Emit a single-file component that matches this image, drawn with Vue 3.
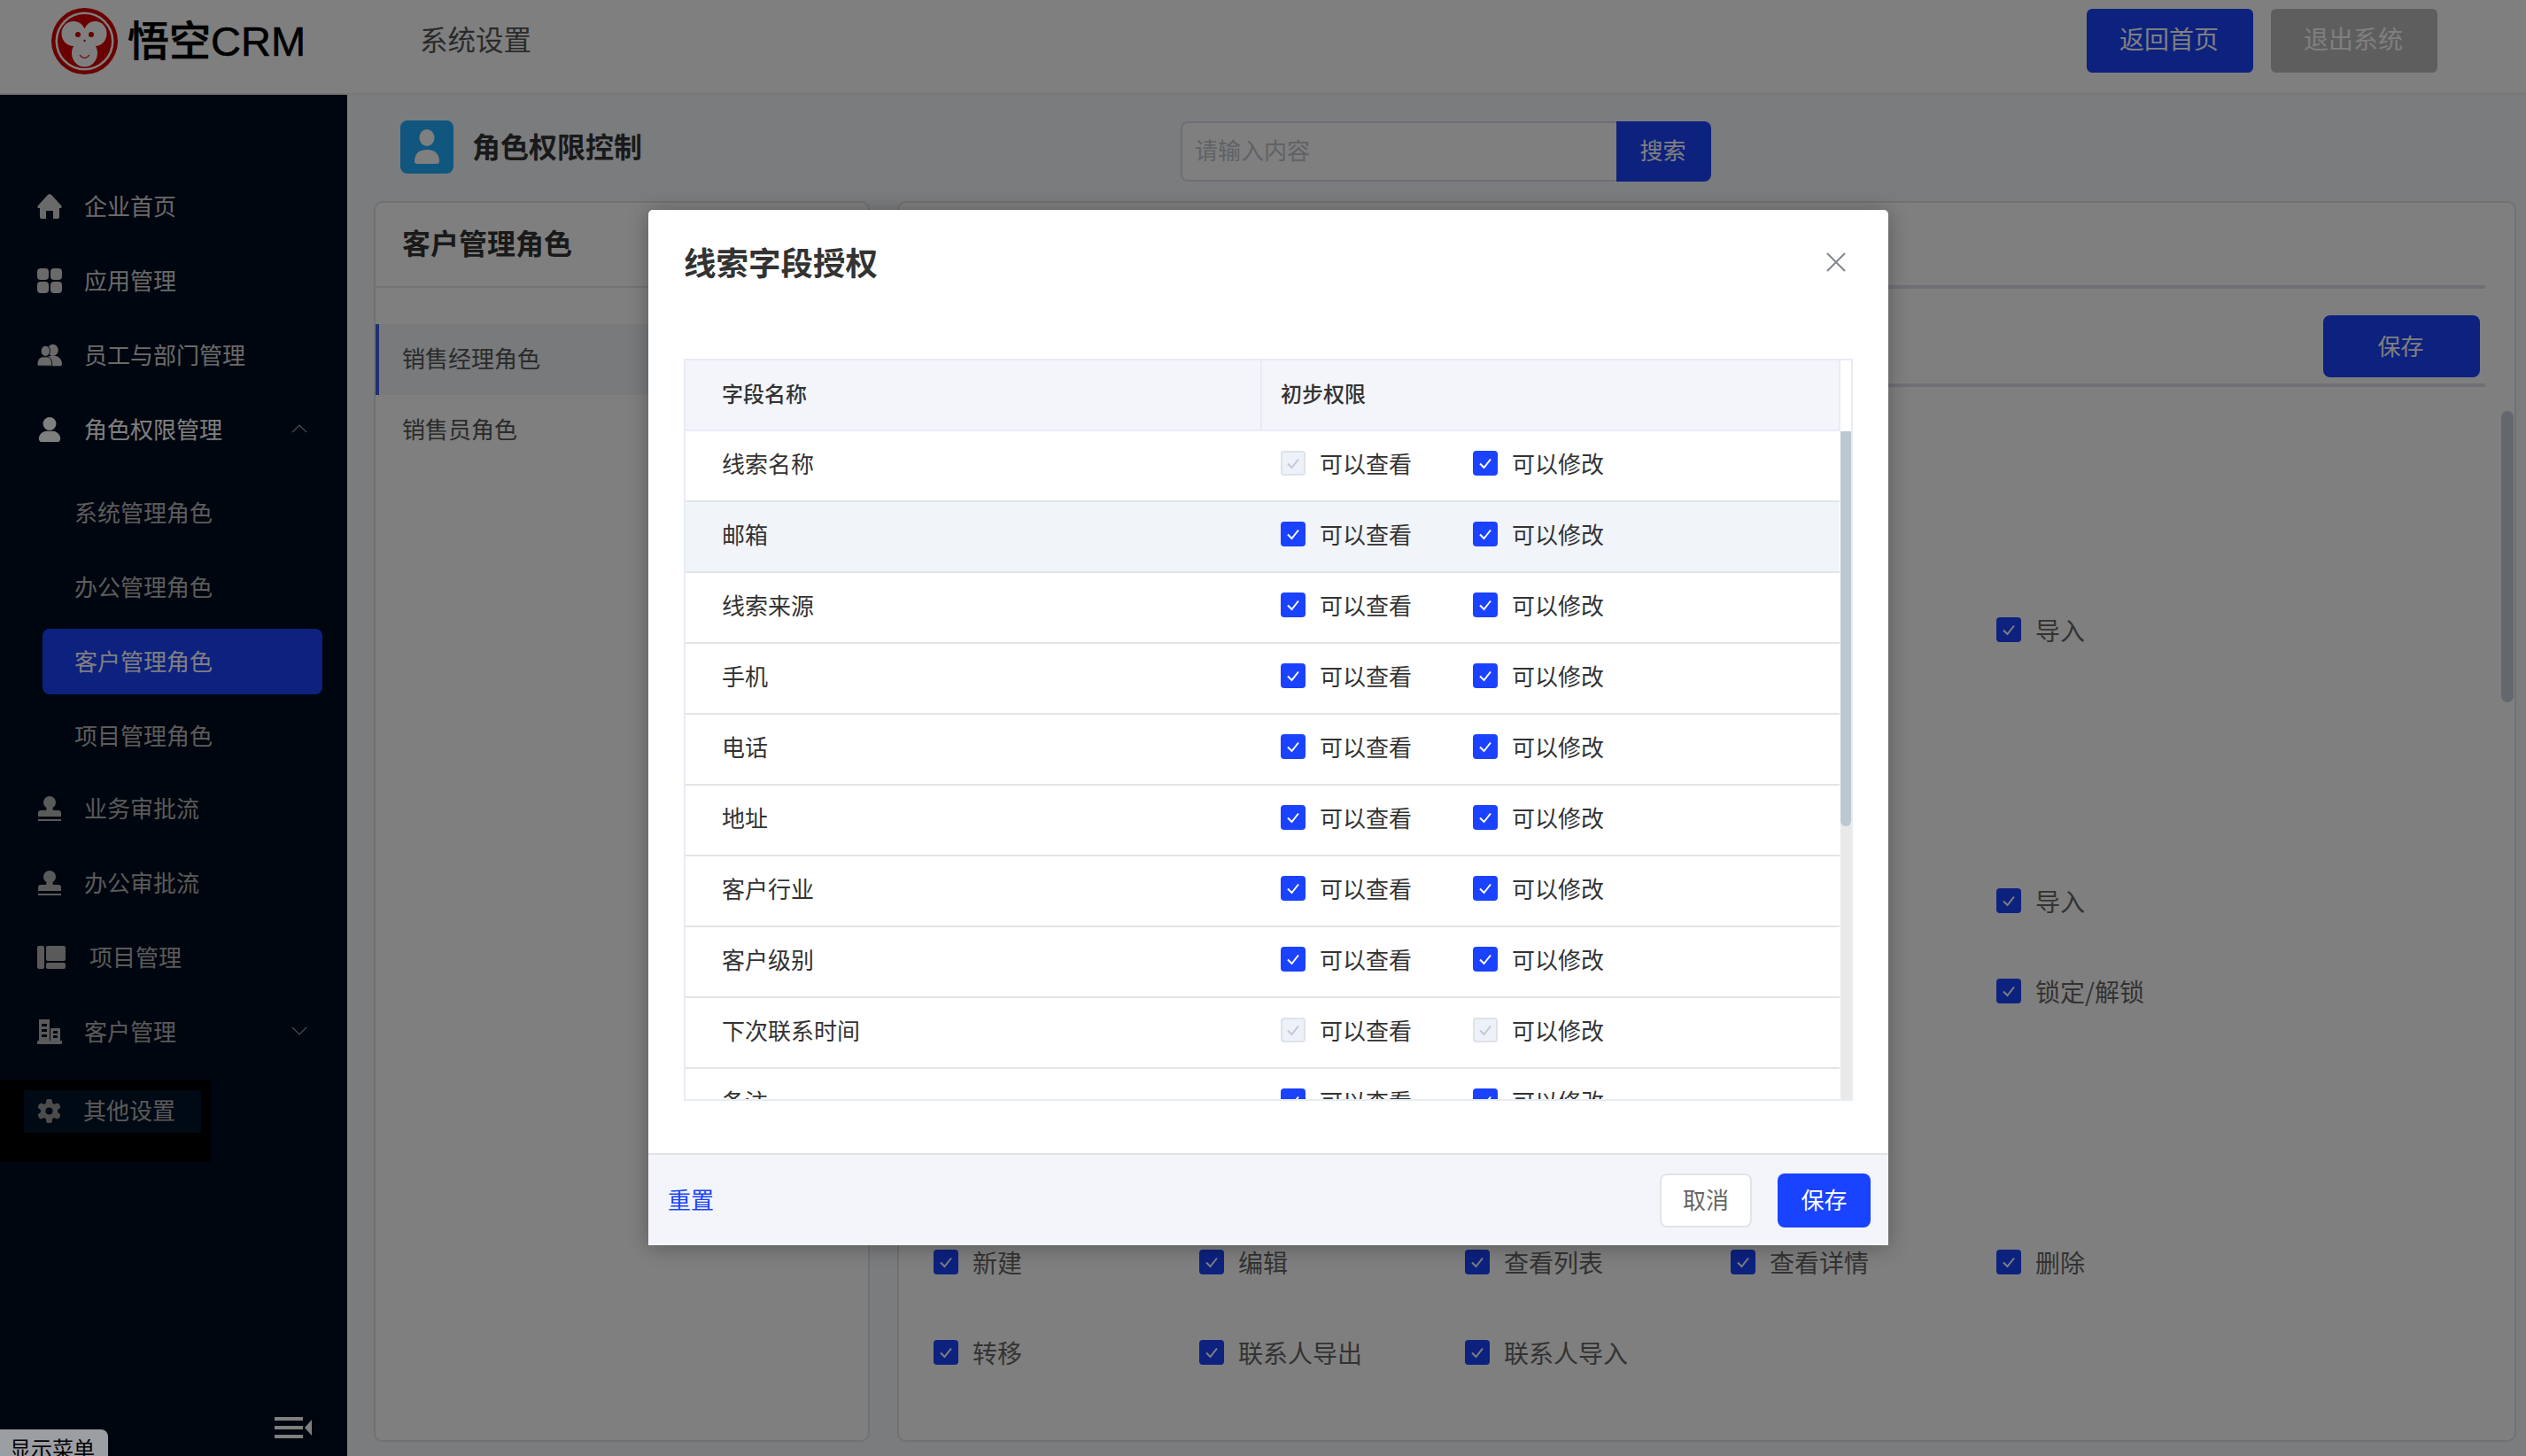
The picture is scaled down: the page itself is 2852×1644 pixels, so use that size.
<script setup>
const roles = ['系统管理角色', '办公管理角色', '客户管理角色', '项目管理角色']
const lower = [
  { key: 'stamp', text: '业务审批流' },
  { key: 'stamp', text: '办公审批流' },
  { key: 'project', text: '项目管理', wide: true },
  { key: 'client', text: '客户管理', chevron: true }
]
const fields = [
  { name: '线索名称', view: 'off', edit: 'on' },
  { name: '邮箱', view: 'on', edit: 'on', hover: true },
  { name: '线索来源', view: 'on', edit: 'on' },
  { name: '手机', view: 'on', edit: 'on' },
  { name: '电话', view: 'on', edit: 'on' },
  { name: '地址', view: 'on', edit: 'on' },
  { name: '客户行业', view: 'on', edit: 'on' },
  { name: '客户级别', view: 'on', edit: 'on' },
  { name: '下次联系时间', view: 'off', edit: 'off' },
  { name: '备注', view: 'on', edit: 'on' }
]
const grid = [
  ['', '', '', '', '导入'],
  ['', '', '', '', ''],
  ['', '', '', '', ''],
  ['', '', '', '', '导入'],
  ['', '', '', '', '锁定/解锁'],
  ['', '', '', '', ''],
  ['', '', '', '', ''],
  ['新建', '编辑', '查看列表', '查看详情', '删除'],
  ['转移', '联系人导出', '联系人导入', '', '']
]
const gearTeeth = [0, 60, 120, 180, 240, 300]
</script>

<template>
  <div class="page">
    <header class="topbar">
      <svg class="logo-mark" viewBox="0 0 75 75">
        <circle cx="37.5" cy="37.5" r="37.5" fill="#d40000" />
        <circle cx="37.5" cy="37.5" r="33" fill="#fff" />
        <circle cx="37.5" cy="37.5" r="30.5" fill="#d40000" />
        <ellipse cx="25" cy="29" rx="13.5" ry="14" fill="#fff" />
        <ellipse cx="49.5" cy="29" rx="13" ry="14" fill="#fff" />
        <ellipse cx="37.5" cy="34" rx="12" ry="10" fill="#fff" />
        <ellipse cx="37.5" cy="51" rx="14.5" ry="15.5" fill="#fff" />
        <circle cx="30" cy="30" r="3" fill="#d40000" />
        <circle cx="45" cy="30" r="3" fill="#d40000" />
        <circle cx="37.5" cy="37" r="1.2" fill="#d40000" />
        <path d="M32 53 Q37.5 60 43 53" fill="none" stroke="#d40000" stroke-width="1.2" />
      </svg>
      <span class="logo-text">悟空CRM</span>
      <span class="top-title">系统设置</span>
      <div class="top-actions">
        <button class="top-btn primary">返回首页</button>
        <button class="top-btn grey">退出系统</button>
      </div>
    </header>

    <div class="main">
      <aside class="sidebar">
        <nav class="nav">
          <div class="nav-item">
            <svg class="nav-icon" viewBox="0 0 28 28"><path fill="currentColor" d="M14 0C15 0 16 1 17 2L27 13C28 14 28 16 26 16H25V26A2 2 0 0 1 23 28H18V19H10V28H5A2 2 0 0 1 3 26V16H2C0 16 0 14 1 13L11 2C12 1 13 0 14 0Z" /></svg>
            <span>企业首页</span>
          </div>
          <div class="nav-item">
            <svg class="nav-icon" viewBox="0 0 28 28"><g fill="currentColor"><rect width="13" height="13" rx="4" /><rect x="15" width="13" height="13" rx="4" /><rect y="15" width="13" height="13" rx="4" /><rect x="15" y="15" width="13" height="13" rx="4" /></g></svg>
            <span>应用管理</span>
          </div>
          <div class="nav-item">
            <svg class="nav-icon" viewBox="0 0 30 26"><g fill="currentColor"><ellipse cx="19" cy="7" rx="6.5" ry="7" /><path d="M9 26C8 19 11 15 15 14H23C27 15 30 19 30 24C30 25 29 26 28 26Z" /><ellipse cx="10" cy="8" rx="5.5" ry="6.5" stroke="#010c1e" stroke-width="1" /><path d="M0 24C0 19 3 15 7 15H13C16 16 18 19 18 26H2C1 26 0 25 0 24Z" stroke="#010c1e" stroke-width="1" /></g></svg>
            <span>员工与部门管理</span>
          </div>
          <div class="nav-item open">
            <svg class="nav-icon" viewBox="0 0 28 30"><g fill="currentColor"><ellipse cx="14" cy="8" rx="8" ry="8" /><path d="M1 26C1 21 6 17 10 17H18C22 17 27 21 27 26C27 28 26 30 24 30H4C2 30 1 28 1 26Z" /></g></svg>
            <span>角色权限管理</span>
            <svg class="chevron" viewBox="0 0 18 10"><path d="M1 9 L9 1 L17 9" fill="none" stroke="currentColor" stroke-width="1.2" /></svg>
          </div>
          <div class="submenu">
            <div v-for="r in roles" :key="r" class="sub-item" :class="{ active: r === '客户管理角色' }"><span>{{ r }}</span></div>
          </div>
          <div v-for="item in lower" :key="item.text" class="nav-item dim">
            <svg v-if="item.key === 'stamp'" class="nav-icon" viewBox="0 0 28 28"><g fill="currentColor"><ellipse cx="14" cy="7" rx="7" ry="7" /><path d="M11 12H17L18 16H24C26 16 27 17 27 19V23H1V19C1 17 2 16 4 16H10Z" /><rect x="1" y="26" width="26" height="2" /></g></svg>
            <svg v-else-if="item.key === 'project'" class="nav-icon project" viewBox="0 0 32 26"><g fill="currentColor"><rect width="8" height="26" rx="2" /><rect x="10" width="22" height="17" rx="2" /><rect x="10" y="19" width="22" height="7" rx="2" /></g></svg>
            <svg v-else class="nav-icon" viewBox="0 0 28 28"><g fill="currentColor"><path fill-rule="evenodd" d="M2 0H14V24H2ZM5 5V8H11V5ZM5 11V14H11V11ZM5 17V20H11V17Z" /><path fill-rule="evenodd" d="M15 10H26V24H15ZM18 13V16H23V13ZM18 18V21H23V18Z" /><rect y="24" width="28" height="4" rx="1" /></g></svg>
            <span :class="{ shifted: item.wide }">{{ item.text }}</span>
            <svg v-if="item.chevron" class="chevron" viewBox="0 0 18 10"><path d="M1 1 L9 9 L17 1" fill="none" stroke="currentColor" stroke-width="1.2" /></svg>
          </div>
          <div class="other-outer">
            <div class="other-inner">
              <svg class="gear" viewBox="0 0 28 28">
                <g fill="currentColor">
                  <rect v-for="a in gearTeeth" :key="a" x="10.5" y="0" width="7" height="28" rx="3" :transform="`rotate(${a} 14 14)`" />
                  <circle cx="14" cy="14" r="10" />
                </g>
                <circle cx="14" cy="14" r="4.2" fill="#011428" />
              </svg>
              <span>其他设置</span>
            </div>
          </div>
        </nav>
        <svg class="collapse" viewBox="0 0 42 24"><g fill="#fff"><rect width="32" height="4" /><rect y="10" width="32" height="4" /><rect y="20" width="32" height="4" /><path d="M42 3V21L34 12Z" /></g></svg>
        <div class="show-menu">显示菜单</div>
      </aside>

      <section class="content">
        <div class="title-row">
          <div class="title-icon">
            <svg viewBox="0 0 30 40" class="title-person"><g fill="#fff"><ellipse cx="15" cy="9.5" rx="8.5" ry="9.5" /><path d="M1 36C1 26 8 23 15 23C22 23 29 26 29 36C29 38 28 39 26 39H4C2 39 1 38 1 36Z" /></g></svg>
          </div>
          <h1 class="title-text">角色权限控制</h1>
          <div class="search">
            <div class="search-input">请输入内容</div>
            <button class="search-btn">搜索</button>
          </div>
        </div>

        <div class="cards">
          <div class="card left-card">
            <div class="card-head">客户管理角色</div>
            <div class="role-list">
              <div class="role-row current">销售经理角色</div>
              <div class="role-row">销售员角色</div>
            </div>
          </div>
          <div class="card right-card">
            <div class="tabs-bar"></div>
            <div class="toolbar"><button class="save-btn">保存</button></div>
            <div class="perm-grid">
              <template v-for="(row, i) in grid" :key="i">
                <div v-for="(cell, j) in row" :key="j" class="perm-cell">
                  <template v-if="cell">
                    <span class="cb on"><svg viewBox="0 0 28 28"><path d="M8 14.5 L12.5 19 L20 9.5" fill="none" stroke="#fff" stroke-width="2" /></svg></span>
                    <span class="perm-label">{{ cell }}</span>
                  </template>
                </div>
              </template>
            </div>
            <div class="page-thumb"></div>
          </div>
        </div>
      </section>
    </div>

    <div class="overlay">
      <div class="dialog">
        <div class="dialog-head">
          <h2 class="dialog-title">线索字段授权</h2>
          <svg class="dialog-close" viewBox="0 0 22 22"><path d="M1 1 L21 21 M21 1 L1 21" stroke="#82868c" stroke-width="2" fill="none" /></svg>
        </div>
        <div class="table">
          <div class="thead">
            <div class="th name">字段名称</div>
            <div class="th rights">初步权限</div>
          </div>
          <div class="tbody">
            <div v-for="f in fields" :key="f.name" class="tr" :class="{ hover: f.hover }">
              <div class="td name">{{ f.name }}</div>
              <div class="td rights">
                <div class="perm">
                  <span class="cb" :class="f.view"><svg viewBox="0 0 28 28"><path d="M8 14.5 L12.5 19 L20 9.5" fill="none" stroke-width="2" /></svg></span>
                  <span>可以查看</span>
                </div>
                <div class="perm">
                  <span class="cb" :class="f.edit"><svg viewBox="0 0 28 28"><path d="M8 14.5 L12.5 19 L20 9.5" fill="none" stroke-width="2" /></svg></span>
                  <span>可以修改</span>
                </div>
              </div>
            </div>
          </div>
          <div class="track"></div>
          <div class="thumb"></div>
        </div>
        <div class="dialog-foot">
          <a class="reset">重置</a>
          <div class="foot-btns">
            <button class="btn-cancel">取消</button>
            <button class="btn-save">保存</button>
          </div>
        </div>
      </div>
    </div>
  </div>
</template>

<style>
html, body { margin: 0; padding: 0; overflow: hidden; }
</style>

<style scoped>
* { box-sizing: border-box; }
.page {
  width: 2852px;
  height: 1644px;
  display: flex;
  flex-direction: column;
  overflow: hidden;
  position: relative;
  background: #f6f8fc;
  font-family: "Noto Sans CJK SC", "Noto Sans", sans-serif;
  color: #555;
}
button { font-family: inherit; border: 0; padding: 0; }
h1, h2 { margin: 0; }

.topbar {
  height: 107px;
  flex: none;
  display: flex;
  align-items: center;
  padding-left: 58px;
  padding-right: 100px;
  background: #fff;
  border-bottom: 2px solid #eceef0;
}
.logo-mark { width: 75px; height: 75px; flex: none; margin-top: -12px; }
.logo-text {
  width: 200px;
  margin-left: 11px;
  margin-top: -12px;
  font-family: "Liberation Sans", "Noto Sans CJK SC", sans-serif;
  font-size: 47px;
  line-height: 56px;
  font-weight: 500;
  color: #000;
  white-space: nowrap;
  -webkit-text-stroke: 0.6px #000;
}
.top-title { margin-left: 130px; margin-top: -19px; font-size: 31.5px; line-height: 44px; color: #555; }
.top-actions { margin-left: auto; margin-top: -13px; display: flex; gap: 20px; }
.top-btn { width: 188px; height: 72px; padding: 0 2px 6px 0; border-radius: 6px; font-size: 28px; color: #fff; }
.top-btn.primary { background: #1a42ff; }
.top-btn.grey { background: #bcbcbc; }

.main { flex: 1; display: flex; min-height: 0; }

.sidebar {
  width: 392px;
  flex: none;
  position: relative;
  background: #010c1e;
  color: #c6c6c6;
}
.nav { padding-top: 84px; font-size: 26px; }
.nav-item {
  height: 84px;
  display: flex;
  align-items: center;
  padding-left: 42px;
  position: relative;
  line-height: 36px;
  color: #d4d4d4;
}
.nav-item span { position: absolute; left: 95px; top: 23px; }
.nav-item span.shifted { left: 101px; }
.nav-item.open { color: #fff; }
.nav-item.dim { color: #b4b4b4; }
.nav-icon { width: 28px; height: 28px; display: block; }
.nav-icon.project { width: 32px; height: 26px; }
.chevron { position: absolute; left: 329px; top: 36px; width: 18px; height: 10px; color: #9a9a9a; }
.submenu { margin: 10px 0 -2px; color: #b8b8b8; }
.sub-item {
  height: 84px;
  margin: 0 28px 0 48px;
  padding: 5px 0;
}
.sub-item span {
  display: block;
  height: 74px;
  line-height: 72px;
  padding-left: 36px;
  border-radius: 8px;
}
.sub-item.active { color: #fff; }
.sub-item.active span { background: #1a42ff; }
.other-outer {
  margin-top: 12px;
  width: 238px;
  height: 93px;
  padding: 12px 11px 0 27px;
  background: #000;
}
.other-inner {
  height: 48px;
  display: flex;
  align-items: center;
  gap: 25px;
  padding-left: 15px;
  background: #011428;
  line-height: 36px;
  color: #b4b4b4;
}
.other-inner span { margin-top: -4px; }
.gear { width: 27px; height: 27px; flex: none; margin-top: -2px; color: #999; }
.collapse { position: absolute; left: 310px; bottom: 20px; width: 42px; height: 24px; }
.show-menu {
  position: absolute;
  left: 0;
  bottom: 0;
  width: 122px;
  height: 30px;
  padding: 5px 0 0 11px;
  background: #9b9ea2;
  border-radius: 0 8px 0 0;
  color: #000;
  font-size: 24px;
  line-height: 32px;
  overflow: hidden;
  z-index: 20;
}

.content { flex: 1; min-width: 0; display: flex; flex-direction: column; padding-top: 29px; }
.title-row { height: 91px; flex: none; display: flex; padding-left: 60px; }
.title-icon {
  width: 60px;
  height: 60px;
  border-radius: 8px;
  background: #20acff;
  display: flex;
  align-items: center;
  justify-content: center;
}
.title-person { width: 30px; height: 40px; }
.title-text {
  margin-left: 21px;
  font-size: 32px;
  line-height: 56px;
  font-weight: 600;
  color: #333;
  white-space: nowrap;
}
.search { margin-left: 608px; margin-top: 1px; display: flex; height: 68px; }
.search-input {
  width: 492px;
  border: 2px solid #dcdfe6;
  border-right: 0;
  border-radius: 8px 0 0 8px;
  background: #fff;
  padding-left: 14px;
  font-size: 26px;
  line-height: 60px;
  color: #c0c4cc;
}
.search-btn { width: 107px; padding: 0 2px 5px 0; background: #1a42ff; color: #fff; font-size: 26px; border-radius: 0 8px 8px 0; }

.cards { display: flex; gap: 31px; padding-left: 30px; }
.card {
  height: 1401px;
  background: #fff;
  border: 2px solid #e2e2e6;
  border-radius: 10px;
}
.left-card { width: 560px; flex: none; }
.card-head {
  height: 96px;
  padding-left: 30px;
  border-bottom: 2px solid #e6e6e9;
  font-size: 32px;
  line-height: 89px;
  font-weight: 600;
  color: #333;
}
.role-list { padding-top: 41px; }
.role-row { height: 80px; padding-left: 30px; font-size: 26px; line-height: 76px; color: #555; }
.role-row.current { padding-left: 26px; border-left: 4px solid #3f5fe8; background: #f0f4f8; }

.right-card { width: 1828px; flex: none; position: relative; }
.tabs-bar { height: 97px; margin-right: 33px; border-bottom: 4px solid #dfe1ea; }
.toolbar {
  height: 111px;
  margin-right: 33px;
  padding-top: 30px;
  padding-right: 6px;
  display: flex;
  justify-content: flex-end;
  align-items: flex-start;
  border-bottom: 4px solid #dfe1ea;
}
.save-btn { width: 177px; height: 70px; padding: 0 2px 4px 0; border-radius: 8px; background: #1a42ff; color: #fff; font-size: 26px; }
.perm-grid {
  padding: 223px 0 0 39px;
  display: grid;
  grid-template-columns: repeat(5, 300px);
  grid-auto-rows: 102px;
}
.perm-cell { display: flex; align-items: center; gap: 16px; }
.perm-label { font-size: 28px; line-height: 40px; color: #666; }
.page-thumb {
  position: absolute;
  left: 1809px;
  top: 235px;
  width: 14px;
  height: 329px;
  border-radius: 7px;
  background: #c8d0dc;
}

.cb {
  width: 28px;
  height: 28px;
  flex: none;
  border-radius: 4px;
  display: block;
}
.cb svg { display: block; width: 28px; height: 28px; }
.cb.on { background: #1a42ff; }
.cb.on path { stroke: #fff; }
.cb.off { background: #edf2fa; box-shadow: inset 0 0 0 2px #dfe2e8; }
.cb.off path { stroke: #c4c8d0; }

.overlay {
  position: absolute;
  inset: 0;
  background: rgba(0, 0, 0, 0.5);
  z-index: 10;
}
.dialog {
  position: absolute;
  left: 732px;
  top: 237px;
  width: 1400px;
  height: 1169px;
  background: #fff;
  border-radius: 5px 5px 0 0;
  box-shadow: 0 2px 24px rgba(0, 0, 0, 0.3);
  display: flex;
  flex-direction: column;
}
.dialog-head { height: 168px; flex: none; padding: 34px 0 0 40px; position: relative; }
.dialog-title { font-size: 36.5px; line-height: 50px; font-weight: 600; color: #333; }
.dialog-close { position: absolute; left: 1330px; top: 48px; width: 22px; height: 22px; }

.table {
  width: 1320px;
  height: 838px;
  flex: none;
  margin-left: 40px;
  border: 2px solid #e8ecf3;
  position: relative;
  overflow: hidden;
}
.thead {
  width: 1304px;
  height: 80px;
  display: flex;
  background: #f3f5fa;
  border-bottom: 2px solid #e8ecf3;
  border-right: 2px solid #e8ecf3;
  font-size: 24px;
  line-height: 73px;
  font-weight: 500;
  color: #333;
}
.th.name { width: 651px; padding-left: 41px; border-right: 2px solid #e8ecf3; }
.th.rights { padding-left: 21px; flex: 1; }
.tbody { width: 1303px; }
.tr {
  height: 80px;
  padding-bottom: 6px;
  display: flex;
  align-items: center;
  border-bottom: 2px solid #e2e4e6;
  font-size: 26px;
  line-height: 36px;
  color: #333;
}
.tr.hover { background: #f1f4f9; }
.td.name { width: 651px; padding-left: 41px; }
.td.rights { display: flex; padding-left: 21px; }
.perm { width: 217px; display: flex; align-items: center; gap: 16px; }
.track { position: absolute; left: 1304px; top: 80px; bottom: 0; width: 12px; background: #e9e9e9; }
.thumb { position: absolute; left: 1304px; top: 80px; width: 12px; height: 446px; border-radius: 0 0 6px 6px; background: #bcc7d2; }

.dialog-foot {
  margin-top: auto;
  height: 104px;
  flex: none;
  padding: 0 20px 0 22px;
  display: flex;
  align-items: center;
  justify-content: space-between;
  background: #f3f5fa;
  border-top: 2px solid #e2e3e5;
}
.reset { font-size: 26px; line-height: 36px; padding-bottom: 2px; color: #1a43ff; }
.foot-btns { display: flex; gap: 29px; }
.btn-cancel {
  width: 104px;
  height: 61px;
  padding-bottom: 3px;
  background: #fff;
  border: 2px solid #e2e4e8;
  border-radius: 8px;
  color: #666;
  font-size: 26px;
}
.btn-save { width: 105px; height: 61px; padding-bottom: 3px; background: #1a43ff; border-radius: 8px; color: #fff; font-size: 26px; }
</style>
